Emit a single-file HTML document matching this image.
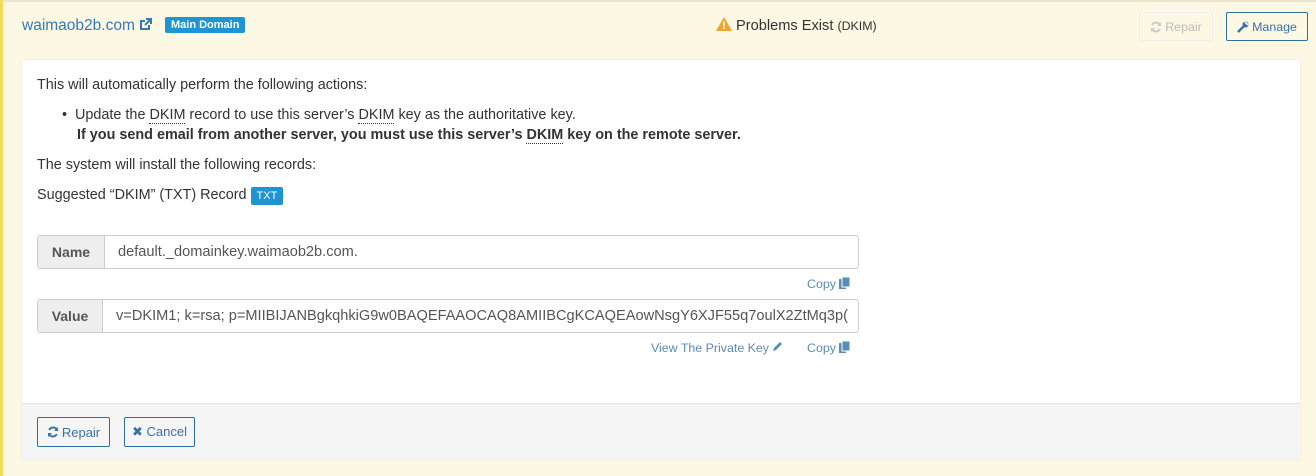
<!DOCTYPE html>
<html><head><style>
*{box-sizing:border-box;margin:0;padding:0}
body{width:1316px;height:476px;background:#fcf8e3;font-family:"Liberation Sans",sans-serif;color:#333;font-size:14.4px;position:relative;overflow:hidden}
.lb{position:absolute;left:0;top:0;width:3px;height:476px;background:#f0d95c}
.tb{position:absolute;left:0;top:0;width:1316px;height:2px;background:#ece6d0}
.a{color:#337ab7}
.abs{position:absolute;white-space:nowrap}
.lbl{background:#1e95d2;color:#fff;font-weight:bold;font-size:11px;border-radius:2px;padding:2px 6px}
.btn{position:absolute;border:1px solid #2f6f9e;border-radius:2px;color:#3a72a6;font-size:13px;display:flex;align-items:center;justify-content:center;gap:3px;background:transparent}
.panel{position:absolute;left:22px;top:60px;width:1278px;height:400px;background:#fff;border-radius:3px;box-shadow:0 0 2px #e8e4d6}
.foot{position:absolute;left:0;top:343px;width:1278px;height:57px;background:#f5f5f5;border-top:1px solid #e3e3e3}
.dk{border-bottom:1px dotted #333}
.ig{position:absolute;left:15px;width:822px;height:34px;border:1px solid #ccc;border-radius:3px;display:flex}
.ig .ad{background:#eee;border-right:1px solid #ccc;font-weight:bold;color:#555;display:flex;align-items:center;justify-content:center;font-size:14px}
.ig .v{display:flex;align-items:center;padding-left:13px;color:#555;white-space:nowrap;overflow:hidden;font-size:14.6px}
.cp{position:absolute;color:#5a8cb8;font-size:12.4px;white-space:nowrap}
</style></head><body>
<div class="tb"></div><div class="lb"></div>
<div class="abs a" style="left:22px;top:17px;font-size:15.5px">waimaob2b.com <svg width="13" height="13" viewBox="0 0 13 13" style="vertical-align:-1px"><path d="M10 7v4H2V3h4" fill="none" stroke="#337ab7" stroke-width="2"/><path d="M7 1h5v5M12 1L6 7" fill="none" stroke="#337ab7" stroke-width="2"/></svg></div>
<div class="abs lbl" style="left:165px;top:17px">Main Domain</div>
<div class="abs" style="left:716px;top:17px;font-size:14.6px"><svg width="16" height="14" viewBox="0 0 16 14" style="vertical-align:-1px"><path d="M8 0L16 14H0z" fill="#f0a530"/><rect x="7.2" y="4.5" width="1.6" height="5" fill="#fff"/><rect x="7.2" y="10.5" width="1.6" height="1.6" fill="#fff"/></svg> Problems Exist <span style="font-size:12.4px">(DKIM)</span></div>
<div class="btn" style="left:1139px;top:12px;width:74px;height:29px;border-color:#eee;color:#bbb;font-size:12.4px"><svg width="12" height="12" viewBox="0 0 12 12"><path d="M10 4A4.3 4.3 0 0 0 2.2 4M2 8a4.3 4.3 0 0 0 7.8 0" fill="none" stroke="#ccc" stroke-width="2"/><path d="M11 1v4H7zM1 11V7h4z" fill="#ccc"/></svg>Repair</div>
<div class="btn" style="left:1226px;top:12px;width:82px;height:29px;font-size:12.4px"><svg width="12" height="12" viewBox="0 0 12 12"><path d="M1 11L6.5 5.5" stroke="#3a72a6" stroke-width="2.5"/><circle cx="8.5" cy="3.5" r="3" fill="#3a72a6"/><path d="M8 1l3 3" stroke="#fcf8e3" stroke-width="1.6"/></svg>Manage</div>
<div class="panel">
<div class="abs" style="left:15px;top:17px">This will automatically perform the following actions:</div>
<div class="abs" style="left:40px;top:47px">• &nbsp;Update the <span class="dk">DKIM</span> record to use this server’s <span class="dk">DKIM</span> key as the authoritative key.</div>
<div class="abs" style="left:55px;top:67px;font-weight:bold">If you send email from another server, you must use this server’s <span class="dk">DKIM</span> key on the remote server.</div>
<div class="abs" style="left:15px;top:97px">The system will install the following records:</div>
<div class="abs" style="left:15px;top:127px">Suggested “DKIM” (TXT) Record <span class="lbl" style="font-weight:normal;padding:3px 6px">TXT</span></div>
<div class="ig" style="top:175px"><div class="ad" style="width:67px">Name</div><div class="v">default._domainkey.waimaob2b.com.</div></div>
<div class="cp" style="left:785px;top:217px">Copy <svg width="11" height="12" viewBox="0 0 11 12" style="vertical-align:-1px"><rect x="0" y="2" width="7" height="10" fill="#5a8cb8"/><rect x="3" y="0" width="8" height="10" fill="#5a8cb8" stroke="#fff" stroke-width="1"/></svg></div>
<div class="ig" style="top:239px"><div class="ad" style="width:65px">Value</div><div class="v">v=DKIM1; k=rsa; p=MIIBIJANBgkqhkiG9w0BAQEFAAOCAQ8AMIIBCgKCAQEAowNsgY6XJF55q7oulX2ZtMq3p(</div></div>
<div class="cp" style="left:629px;top:281px">View The Private Key <svg width="11" height="11" viewBox="0 0 11 11"><path d="M1 10l1-3 6-6 2 2-6 6z" fill="#5a8cb8"/></svg></div>
<div class="cp" style="left:785px;top:281px">Copy <svg width="11" height="12" viewBox="0 0 11 12" style="vertical-align:-1px"><rect x="0" y="2" width="7" height="10" fill="#5a8cb8"/><rect x="3" y="0" width="8" height="10" fill="#5a8cb8" stroke="#fff" stroke-width="1"/></svg></div>
<div class="foot">
<div class="btn" style="left:15px;top:13px;width:73px;height:30px"><svg width="12" height="12" viewBox="0 0 12 12"><path d="M10 4A4.3 4.3 0 0 0 2.2 4M2 8a4.3 4.3 0 0 0 7.8 0" fill="none" stroke="#3a72a6" stroke-width="2"/><path d="M11 1v4H7zM1 11V7h4z" fill="#3a72a6"/></svg>Repair</div>
<div class="btn" style="left:102px;top:13px;width:71px;height:30px">✖ Cancel</div>
</div>
</div>
</body></html>
